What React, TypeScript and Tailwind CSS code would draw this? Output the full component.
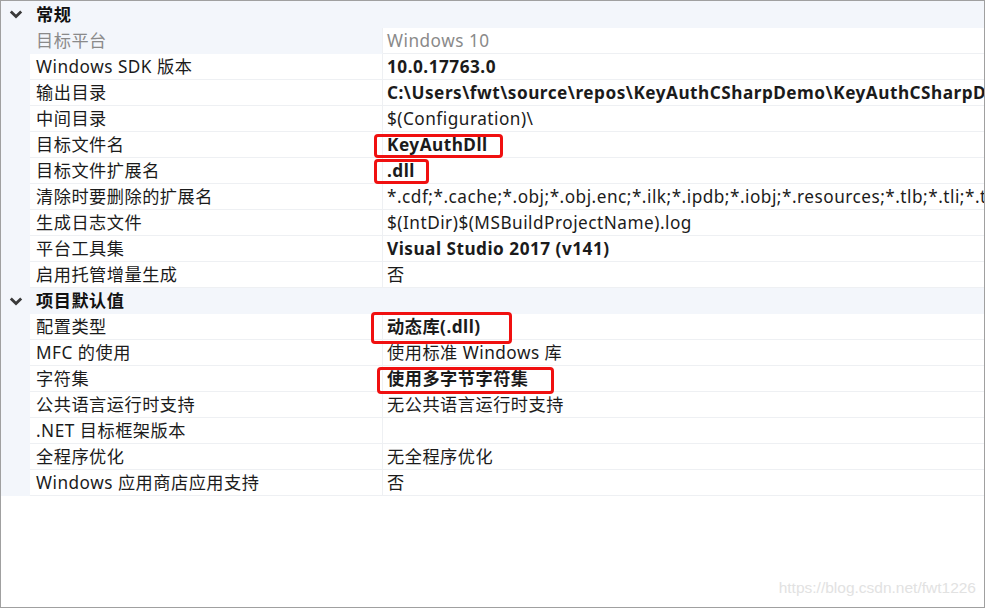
import React from "react";

const FONT = '"Noto Sans", "Noto Sans CJK SC", sans-serif';

type Row = { name: string; value: string; bold?: boolean; disabled?: boolean };

const general: Row[] = [
  { name: "目标平台", value: "Windows 10", disabled: true },
  { name: "Windows SDK 版本", value: "10.0.17763.0", bold: true },
  { name: "输出目录", value: "C:\\Users\\fwt\\source\\repos\\KeyAuthCSharpDemo\\KeyAuthCSharpDemo\\x64\\Debug\\", bold: true },
  { name: "中间目录", value: "$(Configuration)\\" },
  { name: "目标文件名", value: "KeyAuthDll", bold: true },
  { name: "目标文件扩展名", value: ".dll", bold: true },
  { name: "清除时要删除的扩展名", value: "*.cdf;*.cache;*.obj;*.obj.enc;*.ilk;*.ipdb;*.iobj;*.resources;*.tlb;*.tli;*.tlh;*.tmp;*.rsp;*.pgc;*.pgd;*.meta;*.tlog" },
  { name: "生成日志文件", value: "$(IntDir)$(MSBuildProjectName).log" },
  { name: "平台工具集", value: "Visual Studio 2017 (v141)", bold: true },
  { name: "启用托管增量生成", value: "否" },
];

const defaults: Row[] = [
  { name: "配置类型", value: "动态库(.dll)", bold: true },
  { name: "MFC 的使用", value: "使用标准 Windows 库" },
  { name: "字符集", value: "使用多字节字符集", bold: true },
  { name: "公共语言运行时支持", value: "无公共语言运行时支持" },
  { name: ".NET 目标框架版本", value: "" },
  { name: "全程序优化", value: "无全程序优化" },
  { name: "Windows 应用商店应用支持", value: "否" },
];

function Chevron() {
  return (
    <svg width="14" height="9" viewBox="0 0 14 9" className="block">
      <path d="M1.8 1.6 L7 6.6 L12.2 1.6" fill="none" stroke="#3a3a3a" strokeWidth="2.8" />
    </svg>
  );
}

function Header({ title, first }: { title: string; first?: boolean }) {
  return (
    <div className={`flex items-center bg-[#f3f6fb] ${first ? "h-[27px]" : "h-[26px]"}`}>
      <div className="w-[29px] flex justify-center pl-[1px]">
        <Chevron />
      </div>
      <div className="pl-[6px] font-bold text-[#111] leading-none">{title}</div>
    </div>
  );
}

function PropRow({ r }: { r: Row }) {
  return (
    <div className="flex h-[26px]">
      <div className="w-[29px] bg-[#f3f6fb] shrink-0" />
      <div
        className={`w-[353px] shrink-0 flex items-center pl-[6px] border-b border-r border-[#eef0f3] ${
          r.disabled ? "bg-[#f3f6fb] text-[#8a8a8a] border-b-[#f3f6fb]" : "text-[#1b1b1b]"
        }`}
      >
        <span className="whitespace-nowrap leading-none">{r.name}</span>
      </div>
      <div
        className={`flex-1 min-w-0 flex items-center pl-[4px] border-b border-[#eef0f3] overflow-hidden ${
          r.disabled ? "text-[#8a8a8a]" : "text-[#1b1b1b]"
        } ${r.bold ? "font-bold" : ""}`}
      >
        <span className="whitespace-nowrap leading-none">{r.value}</span>
      </div>
    </div>
  );
}

export default function App() {
  return (
    <div
      className="relative w-[985px] h-[608px] overflow-hidden bg-white border border-[#a0a0a0] text-[17.2px] tracking-[0.5px]"
      style={{ fontFamily: FONT }}
    >
      <Header title="常规" first />
      {general.map((r) => (
        <PropRow key={r.name} r={r} />
      ))}
      <Header title="项目默认值" />
      {defaults.map((r) => (
        <PropRow key={r.name} r={r} />
      ))}

      {/* red annotation boxes */}
      <div className="absolute left-[373px] top-[133px] w-[129px] h-[24px] border-[3px] border-[#f01010] rounded-[4px]" />
      <div className="absolute left-[373px] top-[158px] w-[55px] h-[25px] border-[3px] border-[#f01010] rounded-[4px]" />
      <div className="absolute left-[370px] top-[311px] w-[141px] h-[32px] border-[3px] border-[#f01010] rounded-[4px]" />
      <div className="absolute left-[376px] top-[366px] w-[177px] h-[27px] border-[3px] border-[#f01010] rounded-[4px]" />

      <div
        className="absolute right-[8px] bottom-[12px] text-[15.5px] tracking-normal text-[#e2e2e2] leading-none"
        style={{ fontFamily: '"Liberation Sans", Arial, sans-serif' }}
      >
        https://blog.csdn.net/fwt1226
      </div>
    </div>
  );
}
